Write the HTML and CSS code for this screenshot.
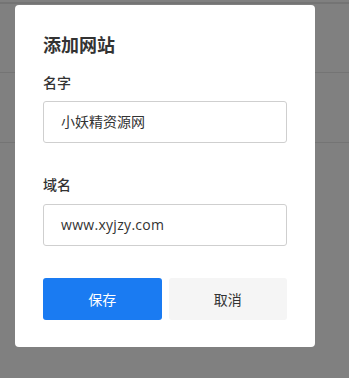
FILE: index.html
```html
<!DOCTYPE html>
<html lang="zh">
<head>
<meta charset="utf-8">
<link rel="stylesheet" href="styles.css">
</head>
<body>
<div class="list">
  <div class="row first"></div>
  <div class="row"></div>
  <div class="row"></div>
</div>
<div class="modal">
  <h2 class="title">添加网站</h2>
  <div class="field">
    <label class="label">名字</label>
    <div class="input">小妖精资源网</div>
  </div>
  <div class="field second">
    <label class="label">域名</label>
    <div class="input latin">www.xyjzy.com</div>
  </div>
  <div class="actions">
    <button class="btn primary">保存</button>
    <button class="btn">取消</button>
  </div>
</div>
</body>
</html>
```
FILE: styles.css
```css
html, body {
  margin: 0;
  padding: 0;
  height: 100%;
}
body {
  background: #808080;
  font-family: "Open Sans", "Noto Sans CJK SC", sans-serif;
  overflow: hidden;
}
.list {
  padding-top: 2px;
}
.row {
  height: 69px;
  border-top: 1px solid #747474;
}
.row.first {
  border-top-width: 2px;
  height: 68px;
}
.modal {
  position: fixed;
  left: 15px;
  top: 5px;
  width: 300px;
  height: 342px;
  box-sizing: border-box;
  background: #fff;
  border-radius: 4px;
  padding: 27px 28px 0;
  color: #333;
}
.title {
  margin: 0;
  font-size: 18px;
  line-height: 24px;
  font-weight: 700;
  font-family: "Noto Sans CJK SC", sans-serif;
}
.field {
  margin-top: 16px;
}
.field.second {
  margin-top: 31px;
}
.label {
  display: block;
  font-size: 14px;
  line-height: 20px;
  font-weight: 500;
  font-family: "Noto Sans CJK SC", sans-serif;
  color: #333;
}
.input {
  margin-top: 9px;
  height: 42px;
  box-sizing: border-box;
  border: 1px solid #cfcfcf;
  border-radius: 3px;
  padding: 0 17px;
  font-size: 14px;
  line-height: 40px;
  color: #333;
}
.input.latin {
  letter-spacing: 0.3px;
}
.second .input {
  margin-top: 10px;
}
.actions {
  margin-top: 32px;
  display: flex;
  gap: 7px;
}
.btn {
  flex: 1;
  height: 42px;
  border: none;
  border-radius: 3px;
  background: #f5f5f5;
  color: #333;
  font-size: 14px;
  font-family: "Noto Sans CJK SC", sans-serif;
  padding: 0;
}
.btn.primary {
  background: #1a7bf2;
  color: #fff;
}
```
